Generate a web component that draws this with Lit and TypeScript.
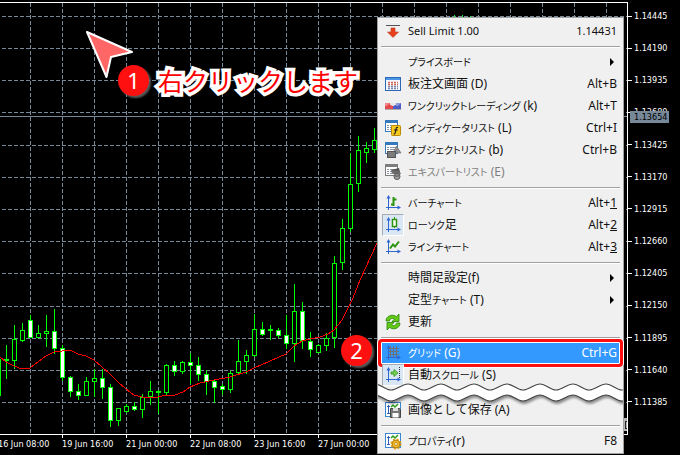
import { LitElement, html, svg, css, nothing } from "lit";
import { customElement, property } from "lit/decorators.js";
import { classMap } from "lit/directives/class-map.js";

type Kind = "up" | "down";
// x, high, low, body top, body bottom, direction
type Candle = [number, number, number, number, number, Kind];

const CANDLES: Candle[] = [
  [-2, 359, 396, 359, 396, "up"], [6, 345, 379, 359, 361, "up"], [14, 325, 369, 339, 361, "up"],
  [22, 323, 342, 330, 341, "up"], [30, 315, 338, 320, 338, "down"], [38, 325, 338, 333, 338, "up"],
  [46, 315, 347, 331, 334, "up"], [54, 309, 354, 331, 349, "down"], [62, 345, 381, 348, 378, "down"],
  [70, 376, 397, 377, 392, "down"], [78, 384, 400, 391, 396, "down"], [86, 377, 396, 381, 396, "up"],
  [94, 369, 397, 378, 382, "up"], [102, 369, 399, 378, 388, "down"], [110, 384, 427, 387, 421, "down"],
  [118, 408, 426, 408, 421, "up"], [126, 404, 413, 406, 412, "up"], [134, 402, 411, 406, 410, "down"],
  [142, 394, 418, 397, 410, "up"], [150, 381, 405, 391, 397, "up"], [158, 390, 414, 391, 392, "up"],
  [166, 364, 395, 365, 393, "up"], [174, 361, 376, 365, 372, "down"], [182, 361, 374, 362, 372, "up"],
  [190, 353, 384, 362, 366, "down"], [198, 357, 381, 365, 375, "down"], [206, 370, 395, 374, 382, "down"],
  [214, 379, 403, 381, 388, "down"], [222, 384, 395, 386, 390, "down"], [230, 371, 393, 373, 390, "up"],
  [238, 340, 374, 361, 373, "up"], [246, 350, 374, 355, 362, "up"], [254, 314, 357, 329, 356, "up"],
  [262, 322, 336, 329, 335, "down"], [270, 325, 340, 329, 330, "up"], [278, 328, 338, 330, 336, "down"],
  [286, 315, 349, 335, 344, "down"], [294, 284, 362, 311, 344, "up"], [302, 302, 349, 311, 341, "down"],
  [310, 332, 357, 341, 350, "down"], [318, 344, 353, 345, 353, "up"], [326, 333, 351, 338, 346, "up"],
  [334, 256, 348, 263, 338, "up"], [342, 219, 270, 228, 263, "up"], [350, 153, 232, 184, 229, "up"],
  [358, 136, 192, 150, 184, "up"], [366, 142, 163, 148, 153, "up"], [374, 128, 153, 140, 150, "up"],
  [454, 15, 40, 20, 36, "up"], [462, 15, 40, 20, 36, "up"], [470, 16, 40, 20, 36, "up"],
];

const AVERAGE =
  "0,357 6,362 14,366 22,369 30,368 38,362 46,356 54,352 62,351 70,350 78,354 86,356 94,360 102,367 " +
  "110,374 118,382 126,389 134,395 142,397 158,397 166,395 175,395 183,392 190,387 200,383 214,380 " +
  "230,377 246,372 254,368 270,361 286,354 294,346 302,341 310,339 320,337 328,334 334,330 342,320 " +
  "350,304 353,298 360,280 377,243";

const GRID_Y = [16, 48, 80, 112, 145, 177, 209, 241, 273, 306, 338, 370, 402];
const GRID_X = Array.from({ length: 19 }, (_, i) => 30 + i * 32);
const PRICES = [
  "1.14445", "1.14190", "1.13935", "1.13680", "1.13425", "1.13170", "1.12915",
  "1.12660", "1.12405", "1.12150", "1.11895", "1.11640", "1.11385",
];
const TIMES = ["16 Jun 08:00", "19 Jun 16:00", "21 Jun 00:00", "22 Jun 08:00", "23 Jun 16:00", "27 Jun 00:00"];

@customElement("price-chart")
export class PriceChart extends LitElement {
  static styles = css`
    :host {
      display: grid;
      grid-template-columns: 1fr 52px;
      grid-template-rows: 1fr 20px;
      min-height: 100vh;
      background: #000;
      color: #fff;
      font: 9px/12px "DejaVu Sans Condensed", "DejaVu Sans", sans-serif;
    }
    .plot {
      margin-top: 2px;
      border: 1px solid #fff;
      border-left: 0;
      overflow: hidden;
    }
    .canvas { display: block; width: 100%; height: 431px; shape-rendering: crispEdges; }
    .grid { stroke: #778899; stroke-dasharray: 4 2; fill: none; }
    .bid { stroke: #778899; }
    .wick { fill: #00ff00; }
    .body { stroke: #00ff00; fill: #000; }
    .body.down { fill: #fff; }
    .average { stroke: #ff0000; fill: none; }
    .prices {
      position: relative;
      display: flex;
      flex-direction: column;
      justify-content: space-between;
      height: 398px;
      padding-top: 10px;
    }
    .price { display: flex; align-items: center; gap: 2px; }
    .price::before { content: ""; width: 4px; height: 1px; background: #fff; }
    .current {
      position: absolute;
      left: 2px;
      top: 111px;
      width: 39px;
      padding-left: 4px;
      box-sizing: border-box;
      background: #778899;
      color: #000;
    }
    .times { display: flex; overflow: hidden; }
    .time { flex: 0 0 64px; white-space: nowrap; padding-top: 3px; }
    .time:first-child { margin-left: -2px; }
    .time::before { content: ""; display: block; width: 1px; height: 3px; margin-top: -3px; background: #fff; }
  `;

  render() {
    return html`
      <div class="plot">
        <svg class="canvas" role="img" aria-label="Price chart">
          <g transform="translate(0 -3)">
            ${GRID_X.map((x) => svg`<path class="grid" d="M${x + 0.5} 3V434"/>`)}
            ${GRID_Y.map((y) => svg`<path class="grid" d="M2 ${y + 0.5}H627"/>`)}
            <path class="bid" d="M0 116.5H627" />
            ${CANDLES.map(
              ([x, high, low, top, bottom, kind]) => svg`
                <rect class="wick" x=${x} y=${high} width="1" height=${low - high}/>
                <rect class="body ${kind}" x=${x - 1.5} y=${top + 0.5} width="4" height=${Math.max(bottom - top - 1, 1)}/>`
            )}
            <polyline class="average" points=${AVERAGE} />
            <rect x="624" y="418" width="3" height="13" fill="#b8b8b8" />
            <path d="M627 421.500H625.500V428.500H627" stroke="#222" fill="none" />
          </g>
        </svg>
      </div>
      <div class="prices">
        ${PRICES.map((p) => html`<div class="price">${p}</div>`)}
        <div class="current">1.13654</div>
      </div>
      <div class="times">${TIMES.map((t) => html`<div class="time">${t}</div>`)}</div>
    `;
  }
}

const axes = svg`
  <path d="M3.500 1V15M1 12.500H15" stroke="#2f66d0" fill="none"/>
  <path d="M3.500 0L1.500 3.500H5.500ZM16 12.500L12.500 10.500V14.500Z" fill="#2f66d0"/>`;

const table = (edge: string) => svg`
  <rect x=".5" y=".5" width="12" height="11" fill="#fff" stroke=${edge}/>
  <path d="M1 2H12" stroke=${edge} stroke-width="2"/>
  <path d="M2 5.500H4M2 7.500H4M2 9.500H4M5 5.500H11M5 7.500H11M5 9.500H11" stroke="#8a95a5"/>`;

const snapshot = svg`
  <rect x=".5" y=".5" width="15" height="14" fill="#fff" stroke="#3b86d0"/>
  <path d="M3.500 3V12M2 4.500H5M2 11.500H5" stroke="#2f5fae" fill="none"/>
  <path d="M6 5L8 3L10 5L13 2" stroke="#2f9a20" stroke-width="1.500" fill="none"/>`;

const ICONS: Record<string, unknown> = {
  sell: svg`<path d="M1 2.500H15" stroke="#555"/><path d="M6 5H10V9H13.500L8 14.500L2.500 9H6Z" fill="#e8401c" stroke="#b83a20" stroke-width=".6"/>`,
  depth: svg`
    <rect x=".5" y="1.500" width="15" height="13" fill="#f4f7ff" stroke="#2d68b8"/>
    <path d="M1 3H15" stroke="#4c96e8" stroke-width="2"/>
    <path d="M3 6.500H13M3 8.500H13" stroke="#d66a58" stroke-width="1.500" stroke-dasharray="2 1"/>
    <path d="M3 10.500H13M3 12.500H13" stroke="#7785a8" stroke-width="1.500" stroke-dasharray="2 1"/>`,
  oneclick: svg`
    <path d="M0 5H7V8H8V11H0Z" fill="#e34a4d"/><path d="M9 5H16V11H8V8H9Z" fill="#4d5cc4"/>
    <path d="M0 5H5L2 8H0Z" fill="#f18486"/><path d="M11 5H16L13 8H11Z" fill="#8d98dc"/>
    <path d="M5 5H11V7H9.500V8H6.500V7H5Z" fill="#e3e3e8"/><path d="M0 11.500H16" stroke="#aaa"/>`,
  indicators: svg`${table("#3579bd")}
    <rect x="6.500" y="5.500" width="9" height="10" rx="1" fill="#f7c91e" stroke="#b98a00"/>
    <path d="M13 7.500C11.500 6.800 11.300 8 11 9.500L10.300 12.500C10 14 9.500 14 8.700 13.700M9 10H12.800" stroke="#222" fill="none" stroke-width="1.200"/>`,
  objects: svg`${table("#3579bd")}
    <path d="M11.500 4L16 11H8Z" fill="#909090" stroke="#666" stroke-width=".6"/>
    <rect x="2.500" y="9.500" width="8" height="6" fill="#7c7c7c" stroke="#555"/>`,
  experts: svg`${table("#7d7d7d")}
    <path d="M6 6L14 4L15 8L12 10H9Z" fill="#555"/><ellipse cx="11" cy="8.500" rx="5" ry="1.700" fill="#6c6c6c" transform="rotate(15 11 8.500)"/>
    <circle cx="12" cy="12.500" r="3" fill="#a5a5a5" stroke="#555"/><path d="M10 12H14" stroke="#444"/>`,
  bars: svg`${axes}<path d="M8.500 2V11M6 9.500H8M9 4.500H11.500" stroke="#2d9410" stroke-width="2" fill="none"/>`,
  candles: svg`${axes}<path d="M9.500 0V11" stroke="#2d9410"/><rect x="7.500" y="2.500" width="4" height="7" fill="#fff" stroke="#2d9410" stroke-width="1.500"/>`,
  line: svg`${axes}<path d="M5 9.500L8 5.500L10 7.500L14 2.500" stroke="#2d9410" stroke-width="2" fill="none"/>`,
  refresh: svg`
    <path d="M1 7C1 2 7 -.500 11.500 2.500L14 0V7.500H7L9.500 5C7 3.500 4.700 5 4.500 7Z" fill="#62c916" stroke="#28850b" stroke-width=".8"/>
    <path d="M15 9C15 14 9 16.500 4.500 13.500L2 16V8.500H9L6.500 11C9 12.500 11.300 11 11.500 9Z" fill="#62c916" stroke="#28850b" stroke-width=".8"/>`,
  grid: svg`
    <path d="M3.500 1V15M1 12.500H15" stroke="#2f66d0" fill="none"/>
    <path d="M3.500 0L1.500 3.500H5.500ZM16 12.500L12.500 10.500V14.500Z" fill="#2f66d0"/>
    <path d="M5.500 1V12M8.500 1V12M11.500 1V12M4 3.500H14M4 6.500H14M4 9.500H14" stroke="#6f6f78" fill="none"/>`,
  scroll: svg`${axes}<path d="M14.500 0V12" stroke="#333" stroke-dasharray="1 1"/>
    <path d="M6 5H9V2.500L13 6L9 9.500V7H6Z" fill="#7ed35a" stroke="#2d9410" stroke-width=".8"/>`,
  save: svg`${snapshot}<path d="M5.500 6.500H14.500L15.500 7.500V15.500H5.500Z" fill="#777" stroke="#444"/>
    <rect x="8" y="6" width="5" height="3" fill="#ddd"/><rect x="7.500" y="11" width="6" height="4.500" fill="#fff"/>`,
  properties: svg`${snapshot}
    <circle cx="11" cy="11" r="4" fill="#efb82d" stroke="#b47d08"/>
    <circle cx="11" cy="11" r="4.800" fill="none" stroke="#d99b14" stroke-width="1.500" stroke-dasharray="2 1.770"/>
    <circle cx="11" cy="11" r="1.500" fill="#fff3c8" stroke="#b47d08" stroke-width=".7"/>`,
};

interface Item {
  label: string;
  icon?: string;
  keys?: string;
  mnemonic?: string;
  submenu?: boolean;
  pressed?: boolean;
  disabled?: boolean;
  selected?: boolean;
  order?: boolean;
}

const MENU: (Item | "line" | "tear")[] = [
  { label: "Sell Limit 1.00", icon: "sell", keys: "1.14431", order: true },
  "line",
  { label: "プライスボード", submenu: true },
  { label: "板注文画面 (D)", icon: "depth", keys: "Alt+B" },
  { label: "ワンクリックトレーディング (k)", icon: "oneclick", keys: "Alt+T" },
  { label: "インディケータリスト (L)", icon: "indicators", keys: "Ctrl+I" },
  { label: "オブジェクトリスト (b)", icon: "objects", keys: "Ctrl+B" },
  { label: "エキスパートリスト (E)", icon: "experts", disabled: true },
  "line",
  { label: "バーチャート", icon: "bars", keys: "Alt+", mnemonic: "1" },
  { label: "ローソク足", icon: "candles", keys: "Alt+", mnemonic: "2", pressed: true },
  { label: "ラインチャート", icon: "line", keys: "Alt+", mnemonic: "3" },
  "line",
  { label: "時間足設定(f)", submenu: true },
  { label: "定型チャート (T)", submenu: true },
  { label: "更新", icon: "refresh" },
  "line",
  { label: "グリッド (G)", icon: "grid", keys: "Ctrl+G", selected: true },
  { label: "自動スクロール (S)", icon: "scroll", pressed: true },
  "tear",
  { label: "画像として保存 (A)", icon: "save" },
  "line",
  { label: "プロパティ(r)", icon: "properties", keys: "F8" },
];

const wave = (y: number) => {
  let d = `M-3 ${y}`;
  for (let x = -3; x < 660; x += 33) d += `c6 0 10 6 16 6s11 -6 17 -6`;
  return d;
};

@customElement("context-menu")
export class ContextMenu extends LitElement {
  static styles = css`
    :host {
      display: block;
      box-sizing: border-box;
      padding: 2px 3px 1px;
      border: 1px solid #a0a0a0;
      background: #f0f0f0;
      font: 12px/22px "Noto Sans", "Noto Sans CJK JP", sans-serif;
    }
    .item {
      position: relative;
      display: flex;
      align-items: center;
      gap: 4px;
      width: 100%;
      height: 22px;
      padding: 0 3px 0 1px;
      border: 0;
      background: none;
      color: #111;
      font: inherit;
      text-align: left;
      white-space: nowrap;
    }
    .item:disabled { color: #808080; }
    .order { font-size: 11px; }
    .selected { background: #3399ff; color: #fff; }
    .selected::after {
      content: "";
      position: absolute;
      inset: -3px;
      border: 3px solid #ff1010;
      border-radius: 4px;
      box-shadow: 0 0 0 1px #fff, inset 0 0 0 1px #fff;
    }
    .cell {
      display: flex;
      align-items: center;
      justify-content: center;
      box-sizing: border-box;
      flex: 0 0 22px;
      height: 22px;
    }
    .pressed { background: #d9e6f4; border: 1px solid #a8acb0; border-right-color: #fff; border-bottom-color: #fff; }
    .icon { flex: none; width: 16px; height: 16px; overflow: visible; }
    .label { flex: 1; }
    .kana { font-size: 10px; font-feature-settings: "palt"; }
    .arrow { width: 4px; height: 8px; margin-right: 3px; }
    .line {
      height: 1px;
      margin: 4px 0;
      border: 0;
      background: #a0a0a0;
      box-shadow: 0 1px #fff;
    }
    .tear { position: relative; height: 13px; }
    .wave {
      position: absolute;
      z-index: 1;
      left: -3px;
      top: -4px;
      width: calc(100% + 6px);
      height: 26px;
    }
    .paper { fill: #fff; filter: drop-shadow(1px 3px 1px rgba(0, 0, 0, 0.4)); }
    .edge { fill: none; stroke: #444; stroke-width: 1.2; }
  `;

  private renderItem(i: Item) {
    const parts = i.label.split(/([\u30a0-\u30ff]+)/);
    return html`
      <button
        class=${classMap({ item: true, selected: !!i.selected, order: !!i.order })}
        role="menuitem"
        ?disabled=${i.disabled}
        aria-haspopup=${i.submenu ? "menu" : nothing}
      >
        <span class=${classMap({ cell: true, pressed: !!i.pressed })}>
          ${i.icon ? html`<svg class="icon" viewBox="0 0 16 16" aria-hidden="true">${ICONS[i.icon]}</svg>` : nothing}
        </span>
        <span class="label">${parts.map((p, n) => (n % 2 ? html`<span class="kana">${p}</span>` : p))}</span>
        ${i.keys ? html`<span>${i.keys}${i.mnemonic ? html`<u>${i.mnemonic}</u>` : nothing}</span>` : nothing}
        ${i.submenu ? html`<svg class="arrow" viewBox="0 0 4 8" aria-hidden="true"><path d="M0 0L4 4L0 8Z" /></svg>` : nothing}
      </button>
    `;
  }

  private renderTear() {
    return html`
      <div class="tear">
        <svg class="wave" aria-hidden="true">
          <g class="paper">
            <path d="${wave(2)}V10H-8Z" />
            <path d="${wave(13)}V7H-8Z" />
          </g>
          <path class="edge" d=${wave(2)} />
          <path class="edge" d=${wave(13)} />
        </svg>
      </div>
    `;
  }

  render() {
    return html`<div role="menu">
      ${MENU.map((m) => (m === "line" ? html`<hr class="line" />` : m === "tear" ? this.renderTear() : this.renderItem(m)))}
    </div>`;
  }
}

@customElement("step-badge")
export class StepBadge extends LitElement {
  @property() number = "";
  static styles = css`
    :host {
      display: block;
      width: 31px;
      height: 31px;
      border-radius: 50%;
      background: #ff1010;
      box-shadow: 2px 2px 2px rgba(128, 128, 128, 0.7);
      color: #fff;
      font: 22px/31px "Noto Sans", sans-serif;
      text-align: center;
    }
  `;
  render() {
    return html`${this.number}`;
  }
}

@customElement("app-root")
export class AppRoot extends LitElement {
  static styles = css`
    :host { display: block; position: relative; overflow: hidden; }
    .menu { position: absolute; left: 377px; top: 17px; width: 247px; }
    .pointer { position: absolute; left: 80px; top: 24px; width: 60px; height: 60px; }
    .first { position: absolute; left: 118px; top: 65px; display: flex; align-items: center; gap: 9px; }
    .second { position: absolute; left: 341px; top: 335px; }
    .caption {
      color: #ff0000;
      font: 400 25px/31px "Noto Sans CJK JP", sans-serif;
      -webkit-text-stroke: 7px #fff;
      paint-order: stroke fill;
      stroke-linejoin: round;
      white-space: nowrap;
    }
  `;

  render() {
    return html`
      <price-chart></price-chart>
      <context-menu class="menu"></context-menu>
      <svg class="pointer" viewBox="0 0 60 60" aria-hidden="true">
        <path d="M7 8L52 28L31 33L26.500 53Z" fill="#ff6666" stroke="#fff" stroke-width="2" stroke-linejoin="round" />
      </svg>
      <div class="first">
        <step-badge number="1"></step-badge>
        <span class="caption">右クリックします</span>
      </div>
      <step-badge class="second" number="2"></step-badge>
    `;
  }
}
